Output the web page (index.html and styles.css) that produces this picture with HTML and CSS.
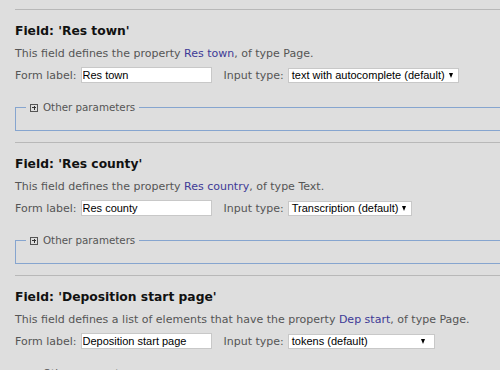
FILE: index.html
```html
<!DOCTYPE html>
<html>
<head>
<meta charset="utf-8">
<link rel="stylesheet" href="styles.css">
</head>
<body>
<div class="page">
  <section class="field">
    <h2 class="field-title">Field: 'Res town'</h2>
    <p class="field-desc">This field defines the property <a href="#">Res town</a>, of type Page.</p>
    <div class="form-row">
      <label class="lbl">Form label:</label>
      <input class="text-input" type="text" value="Res town">
      <label class="lbl lbl-type">Input type:</label>
      <span class="select"><span class="select-text">text with autocomplete (default)</span><span class="arrow"></span></span>
    </div>
    <fieldset class="params">
      <legend><span class="toggle"></span>Other parameters</legend>
    </fieldset>
  </section>
  <section class="field">
    <h2 class="field-title">Field: 'Res county'</h2>
    <p class="field-desc">This field defines the property <a href="#">Res country</a>, of type Text.</p>
    <div class="form-row">
      <label class="lbl">Form label:</label>
      <input class="text-input" type="text" value="Res county">
      <label class="lbl lbl-type">Input type:</label>
      <span class="select"><span class="select-text">Transcription (default)</span><span class="arrow"></span></span>
    </div>
    <fieldset class="params">
      <legend><span class="toggle"></span>Other parameters</legend>
    </fieldset>
  </section>
  <section class="field">
    <h2 class="field-title">Field: 'Deposition start page'</h2>
    <p class="field-desc">This field defines a list of elements that have the property <a href="#">Dep start</a>, of type Page.</p>
    <div class="form-row">
      <label class="lbl">Form label:</label>
      <input class="text-input" type="text" value="Deposition start page">
      <label class="lbl lbl-type">Input type:</label>
      <span class="select select-wide"><span class="select-text">tokens (default)</span><span class="arrow"></span></span>
    </div>
    <fieldset class="params">
      <legend><span class="toggle"></span>Other parameters</legend>
    </fieldset>
  </section>
</div>
</body>
</html>
```
FILE: styles.css
```css
html, body {
  margin: 0;
  padding: 0;
  background: #dedede;
  overflow: hidden;
}
body {
  font-family: "DejaVu Sans", Verdana, sans-serif;
  font-size: 11px;
  color: #555;
}
.page {
  padding: 9px 0 0 15px;
  width: 520px;
}
.field {
  border-top: 1px solid #b8b8b8;
  padding-top: 13px;
}
.field-title {
  margin: 0;
  font-size: 12.3px;
  font-weight: bold;
  color: #111;
  line-height: 16px;
}
.field-desc {
  margin: 8px 0 0;
  line-height: 14px;
}
.field-desc a {
  color: #3d3a96;
  text-decoration: none;
}
.form-row {
  display: flex;
  align-items: center;
  margin-top: 6px;
  height: 16px;
}
.lbl {
  margin-right: 4px;
}
.lbl-type {
  margin-left: 12px;
}
.text-input {
  box-sizing: border-box;
  width: 131px;
  height: 16px;
  border: 1px solid #c8c8c8;
  background: #fff;
  padding: 0 1px;
  margin: 0;
  font-family: "Liberation Sans", Arial, sans-serif;
  font-size: 11px;
  color: #000;
}
.select {
  box-sizing: border-box;
  display: inline-flex;
  align-items: center;
  height: 15px;
  border: 1px solid #c8c8c8;
  background: #fff;
  padding: 0 5px 0 3px;
  font-family: "Liberation Sans", Arial, sans-serif;
  font-size: 11px;
  color: #000;
}
.select-wide {
  width: 147px;
  justify-content: space-between;
  padding-right: 9px;
}
.arrow {
  width: 0;
  height: 0;
  margin-left: 4px;
  border-left: 2.5px solid transparent;
  border-right: 2.5px solid transparent;
  border-top: 5px solid #000;
}
.params {
  margin: 18px -20px 0 0;
  padding: 0 10px 16px;
  border: 1px solid #86a5cf;
  border-right: 0;
  min-width: 0;
}
.params legend {
  padding: 0 4px;
  line-height: 13px;
  font-size: 10.3px;
  display: flex;
  align-items: center;
}
.toggle {
  box-sizing: border-box;
  position: relative;
  display: inline-block;
  width: 8px;
  height: 8px;
  border: 1px solid #555;
  margin-right: 5px;
}
.toggle::before, .toggle::after {
  content: "";
  position: absolute;
  background: #333;
}
.toggle::before {
  left: 1px;
  top: 2.5px;
  width: 4px;
  height: 1px;
}
.toggle::after {
  left: 2.5px;
  top: 1px;
  width: 1px;
  height: 4px;
}
.field + .field {
  margin-top: 11px;
}
```
